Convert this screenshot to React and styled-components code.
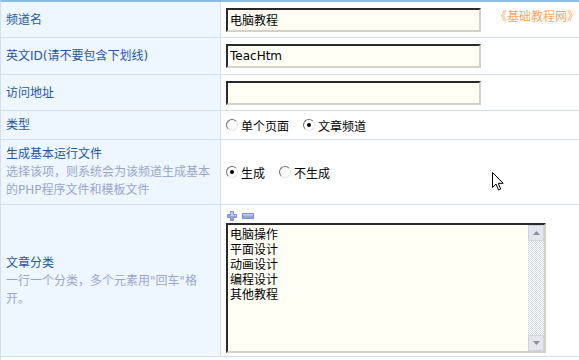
import React from 'react'
import styled, { createGlobalStyle } from 'styled-components';

const Global = createGlobalStyle`
    body{
        margin:0;
        background:#fff;
        font-family:"DejaVu Sans","Noto Sans CJK SC",sans-serif;
        font-size:12px;
    }
`;

const Form = styled.div`
    position:relative;
    width:579px;
    height:360px;
    border-top:2px solid #8bbde2;
    border-left:1px solid #d3dfee;
    box-sizing:border-box;
    overflow:hidden;
`;

const Row = styled.div`
    display:grid;
    grid-template-columns:220px 1fr;
    height:${p => p.h}px;
    border-bottom:1px solid #d3dfee;
    box-sizing:border-box;
`;

const Label = styled.div`
    background:#eef6ff;
    border-right:1px solid #d3dfee;
    padding-left:5px;
    display:flex;
    flex-direction:column;
    justify-content:center;
    line-height:18px;
    .title{
        color:#1d58a6;
    }
    .desc{
        color:#99a7cb;
    }
`;

const Value = styled.div`
    display:flex;
    align-items:${p => p.top ? 'flex-start' : 'center'};
    flex-direction:${p => p.col ? 'column' : 'row'};
    padding-left:5px;
    padding-top:${p => p.pt || 0}px;
    background:#fff;
`;

const Input = styled.input`
    width:255px;
    height:24px;
    box-sizing:border-box;
    border:2px solid;
    border-color:#2a2a2a #d4d0c8 #d4d0c8 #2a2a2a;
    background:#fffff6;
    font-family:inherit;
    font-size:12px;
    color:#000;
    padding:0 2px;
    outline:none;
`;

const Brand = styled.span`
    color:#f6a661;
    margin-left:14px;
    align-self:flex-start;
    margin-top:5px;
`;

const Options = styled.div`
    display:flex;
    gap:14px;
`;

const Option = styled.label`
    display:flex;
    align-items:center;
    gap:3px;
    color:#000;
`;

const Radio = styled.span`
    width:12px;
    height:12px;
    box-sizing:border-box;
    border-radius:50%;
    border:1px solid;
    border-color:#6f6f6f #e6e6e6 #e6e6e6 #6f6f6f;
    background:#fff;
    display:flex;
    align-items:center;
    justify-content:center;
    &::after{
        content:'';
        width:4px;
        height:4px;
        border-radius:50%;
        background:${p => p.checked ? '#000' : 'transparent'};
    }
`;

const Tools = styled.div`
    display:flex;
    align-items:center;
    gap:5px;
    height:13px;
    margin-bottom:1px;
    margin-left:1px;
`;

const AreaBox = styled.div`
    display:flex;
    width:320px;
    height:130px;
    box-sizing:border-box;
    border:2px solid;
    border-color:#2a2a2a #d4d0c8 #d4d0c8 #2a2a2a;
    background:#fffff6;
`;

const Area = styled.textarea`
    flex:1;
    border:none;
    resize:none;
    outline:none;
    background:transparent;
    font-family:inherit;
    font-size:12px;
    line-height:15px;
    padding:3px 2px;
    color:#000;
    overflow:hidden;
`;

const ScrollBar = styled.div`
    width:16px;
    display:flex;
    flex-direction:column;
    background:repeating-conic-gradient(#cfd6e6 0 25%, #fff 0 50%) 0 0/2px 2px;
`;

const ScrollBtn = styled.div`
    height:16px;
    background:#e3e6ee;
    border:1px solid #d0d4de;
    box-sizing:border-box;
    display:flex;
    align-items:center;
    justify-content:center;
    margin-top:${p => p.bottom ? 'auto' : '0'};
`;

const Cursor = styled.svg`
    position:absolute;
    left:491px;
    top:170px;
`;

function Choice({ label, checked }) {
    return (
        <Option>
            <Radio checked={checked} />
            {label}
        </Option>
    )
}

export default function App() {
    return (
        <>
            <Global />
            <Form>
                <Row h={36}>
                    <Label><span className="title">频道名</span></Label>
                    <Value>
                        <Input defaultValue="电脑教程" />
                        <Brand>《基础教程网》</Brand>
                    </Value>
                </Row>
                <Row h={37}>
                    <Label><span className="title">英文ID(请不要包含下划线)</span></Label>
                    <Value><Input defaultValue="TeacHtm" /></Value>
                </Row>
                <Row h={36}>
                    <Label><span className="title">访问地址</span></Label>
                    <Value><Input defaultValue="" /></Value>
                </Row>
                <Row h={29}>
                    <Label><span className="title">类型</span></Label>
                    <Value>
                        <Options>
                            <Choice label="单个页面" />
                            <Choice label="文章频道" checked />
                        </Options>
                    </Value>
                </Row>
                <Row h={65}>
                    <Label>
                        <span className="title">生成基本运行文件</span>
                        <span className="desc">选择该项，则系统会为该频道生成基本<br />的PHP程序文件和模板文件</span>
                    </Label>
                    <Value>
                        <Options>
                            <Choice label="生成" checked />
                            <Choice label="不生成" />
                        </Options>
                    </Value>
                </Row>
                <Row h={152}>
                    <Label>
                        <span className="title">文章分类</span>
                        <span className="desc">一行一个分类，多个元素用"回车"格<br />开。</span>
                    </Label>
                    <Value col top pt={4}>
                        <Tools>
                            <svg width="10" height="10" viewBox="0 0 10 10">
                                <path d="M3.5 0.5h3v3h3v3h-3v3h-3v-3h-3v-3h3z" fill="#95a6dc" stroke="#7f92cf" />
                                <path d="M4 1h2v3h3v1H4z" fill="#c4cff0" />
                            </svg>
                            <svg width="12" height="6" viewBox="0 0 12 6">
                                <rect x="0.5" y="0.5" width="11" height="5" fill="#95a6dc" stroke="#7f92cf" />
                                <rect x="1" y="1" width="10" height="1.5" fill="#c4cff0" />
                            </svg>
                        </Tools>
                        <AreaBox>
                            <Area defaultValue={"电脑操作\n平面设计\n动画设计\n编程设计\n其他教程"} />
                            <ScrollBar>
                                <ScrollBtn>
                                    <svg width="7" height="4" viewBox="0 0 7 4"><path d="M0 4L3.5 0L7 4z" fill="#8a8f9c" /></svg>
                                </ScrollBtn>
                                <ScrollBtn bottom>
                                    <svg width="7" height="4" viewBox="0 0 7 4"><path d="M0 0L3.5 4L7 0z" fill="#8a8f9c" /></svg>
                                </ScrollBtn>
                            </ScrollBar>
                        </AreaBox>
                    </Value>
                </Row>
                <Cursor width="12" height="20" viewBox="0 0 12 20">
                    <path d="M0.5 0.5v15l3.5-3.5 2.5 6 2.2-1-2.5-5.7h5z" fill="#fff" stroke="#000" strokeWidth="1" />
                </Cursor>
            </Form>
        </>
    )
}
